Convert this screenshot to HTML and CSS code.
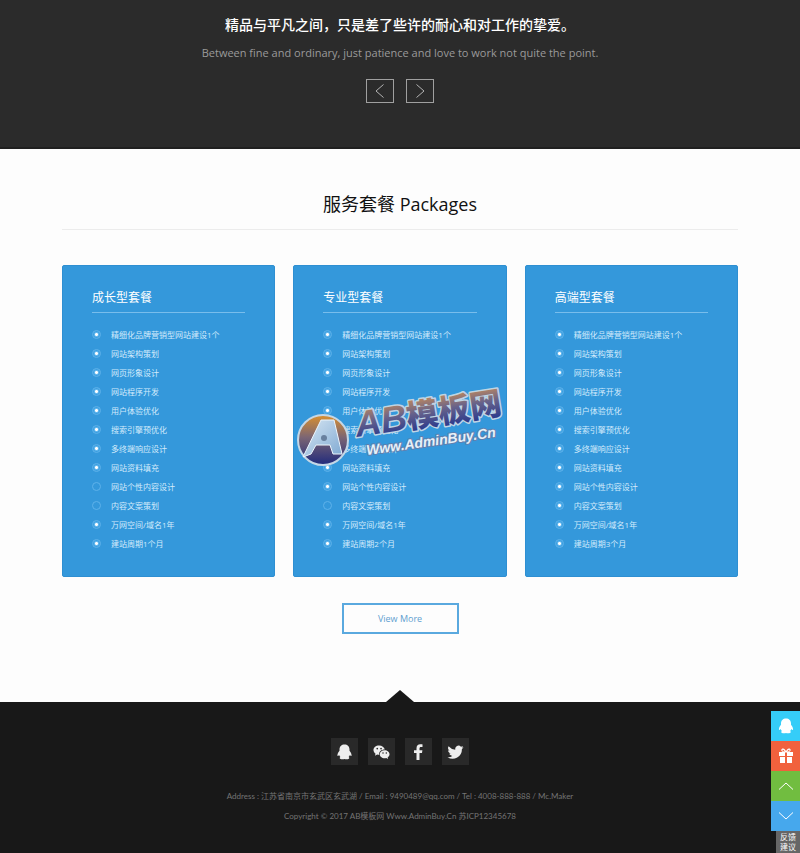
FILE: index.html
```html
<!DOCTYPE html>
<html lang="zh-CN">
<head>
<meta charset="utf-8">
<meta name="viewport" content="width=device-width, initial-scale=1">
<title>服务套餐 Packages</title>
<link rel="stylesheet" href="styles.css">
</head>
<body>
<svg class="sprite" aria-hidden="true">
  <symbol id="qq" viewBox="0 0 16 16"><path d="M8 .5C5 .5 3 2.600 3 5.400v1.400C2 8 1 9.700.9 11.200c0 1.200.8 1 1.700-.1.200.8.700 1.500 1.300 2-1 .4-1.100 2.100.8 2.100H7.200L8 14.900l.8.300h2.500c1.900 0 1.800-1.700.8-2.100.600-.5 1.100-1.200 1.300-2 .9 1.100 1.700 1.300 1.700.1C15 9.700 14 8 13 6.800V5.400C13 2.600 11 .5 8 .5z"/></symbol>
  <symbol id="wechat" viewBox="0 0 18 16"><path fill-rule="evenodd" d="M6.500 1C3 1 .5 3.200.5 6c0 1.600.9 3 2.200 3.900L2 12l2.500-1.300c.6.200 1.300.3 2 .3C6 7.700 9 5.300 12.500 5.400 12 2.800 9.500 1 6.500 1zM4.500 3.500a.9.900 0 1 1 0 1.800.9.900 0 0 1 0-1.800zm4 0a.9.900 0 1 1 0 1.800.9.900 0 0 1 0-1.800zM12.300 6.200c-3 0-5.200 1.900-5.200 4.200s2.300 4.200 5.200 4.200c.6 0 1.200-.1 1.700-.2l2 1.100-.5-1.800c1.200-.8 2-2 2-3.300 0-2.300-2.300-4.200-5.200-4.200zm-1.700 2.100a.8.800 0 1 1 0 1.600.8.800 0 0 1 0-1.600zm3.500 0a.8.800 0 1 1 0 1.600.8.800 0 0 1 0-1.600z"/></symbol>
  <symbol id="facebook" viewBox="0 0 16 16"><path d="M6 16V9H3.500V6.200H6V4.300C6 1.700 7.500.3 9.800.3c1 0 1.900.1 2.200.1v2.600h-1.500C9.300 3 9 3.600 9 4.500v1.700h2.900L11.500 9H9v7z"/></symbol>
  <symbol id="twitter" viewBox="0 0 16 16"><path d="M16 3.200c-.6.300-1.200.4-1.900.5.700-.4 1.200-1 1.400-1.800-.6.400-1.300.6-2.100.8A3.300 3.300 0 0 0 7.800 5.700 9.300 9.300 0 0 1 1.100 2.300a3.300 3.300 0 0 0 1 4.400c-.5 0-1-.2-1.500-.4 0 1.600 1.100 2.900 2.600 3.200-.5.100-1 .2-1.500.1.400 1.300 1.600 2.200 3.100 2.300A6.600 6.600 0 0 1 0 13.200 9.300 9.300 0 0 0 14.400 5c.6-.5 1.200-1.100 1.600-1.800z"/></symbol>
  <symbol id="gift" viewBox="0 0 16 16"><path fill-rule="evenodd" d="M1 4h4C2.500 3 3 .5 5 .5c1.500 0 2.500 1.500 3 2.800C8.500 2 9.500.5 11 .5c2 0 2.500 2.500 0 3.500h4v4H9V4.500H7V8H1zm4-2.300c-1 0-.8 1.600 1.800 1.900C6.300 2.500 5.700 1.700 5 1.700zm6 0c-.7 0-1.300.8-1.800 1.900 2.600-.3 2.800-1.900 1.800-1.900zM2 9h5v6H2zm7 0h5v6H9z"/></symbol>
  <symbol id="left" viewBox="0 0 16 16"><path class="line" d="M11.500 1.500 4 8l7.500 6.500"/></symbol>
  <symbol id="right" viewBox="0 0 16 16"><path class="line" d="M4.500 1.500 12 8l-7.500 6.500"/></symbol>
  <symbol id="up" viewBox="0 0 16 16"><path class="line" d="M1 11.500 8 5l7 6.500"/></symbol>
  <symbol id="down" viewBox="0 0 16 16"><path class="line" d="M1 4.500 8 11l7-6.500"/></symbol>
</svg>

<section class="motto">
  <h2>精品与平凡之间，只是差了些许的耐心和对工作的挚爱。</h2>
  <p>Between fine and ordinary, just patience and love to work not quite the point.</p>
  <div class="pager">
    <button type="button" aria-label="Previous"><svg><use href="#left"/></svg></button>
    <button type="button" aria-label="Next"><svg><use href="#right"/></svg></button>
  </div>
</section>

<main class="packages">
  <h1>服务套餐 Packages</h1>
  <div class="cards">
    <article class="card">
      <h3>成长型套餐</h3>
      <ul>
        <li>精细化品牌营销型网站建设1个</li><li>网站架构策划</li><li>网页形象设计</li><li>网站程序开发</li><li>用户体验优化</li><li>搜索引擎预优化</li><li>多终端响应设计</li><li>网站资料填充</li><li class="off">网站个性内容设计</li><li class="off">内容文案策划</li><li>万网空间/域名1年</li><li>建站周期1个月</li>
      </ul>
    </article>
    <article class="card">
      <h3>专业型套餐</h3>
      <ul>
        <li>精细化品牌营销型网站建设1个</li><li>网站架构策划</li><li>网页形象设计</li><li>网站程序开发</li><li>用户体验优化</li><li>搜索引擎预优化</li><li>多终端响应设计</li><li>网站资料填充</li><li>网站个性内容设计</li><li class="off">内容文案策划</li><li>万网空间/域名1年</li><li>建站周期2个月</li>
      </ul>
      <svg class="watermark" viewBox="0 0 212 86" role="img" aria-label="AB模板网 Www.AdminBuy.Cn">
        <defs>
          <linearGradient id="ball" x1="0" y1="0" x2="0" y2="1"><stop offset="0" stop-color="#d9902f"/><stop offset=".45" stop-color="#7b6574"/><stop offset="1" stop-color="#202a7c"/></linearGradient>
          <linearGradient id="ink" x1="0" y1="0" x2="0" y2="1"><stop offset=".15" stop-color="#c28a5c"/><stop offset=".5" stop-color="#65618b"/><stop offset=".9" stop-color="#28378c"/></linearGradient>
          <linearGradient id="steel" x1="0" y1="0" x2="1" y2="1"><stop offset="0" stop-color="#d8e7f3"/><stop offset="1" stop-color="#7fa9d2"/></linearGradient>
        </defs>
        <circle cx="27" cy="55" r="25" fill="url(#ball)" stroke="#c4d7e6" stroke-width="2"/>
        <path d="M7 72 25 35h13l8 34h-9l-3-9H20l-5 9z" fill="url(#steel)" stroke="#edf5fb"/>
        <circle cx="28" cy="53" r="3" fill="#68809e"/>
        <text class="wm-name" x="61" y="52" transform="rotate(-9 61 52)"><tspan class="wm-latin">AB</tspan>模板网</text>
        <text class="wm-url" x="71" y="70" transform="rotate(-8 71 70)">Www.AdminBuy.Cn</text>
      </svg>
    </article>
    <article class="card">
      <h3>高端型套餐</h3>
      <ul>
        <li>精细化品牌营销型网站建设1个</li><li>网站架构策划</li><li>网页形象设计</li><li>网站程序开发</li><li>用户体验优化</li><li>搜索引擎预优化</li><li>多终端响应设计</li><li>网站资料填充</li><li>网站个性内容设计</li><li>内容文案策划</li><li>万网空间/域名1年</li><li>建站周期3个月</li>
      </ul>
    </article>
  </div>
  <a class="more" href="#">View More</a>
</main>

<footer class="footer">
  <nav class="social">
    <a href="#" aria-label="QQ"><svg><use href="#qq"/></svg></a>
    <a href="#" aria-label="WeChat"><svg><use href="#wechat"/></svg></a>
    <a href="#" aria-label="Facebook"><svg><use href="#facebook"/></svg></a>
    <a href="#" aria-label="Twitter"><svg><use href="#twitter"/></svg></a>
  </nav>
  <p>Address : 江苏省南京市玄武区玄武湖 / Email : 9490489@qq.com / Tel : 4008-888-888 / Mc.Maker</p>
  <p>Copyright © 2017 AB模板网 Www.AdminBuy.Cn 苏ICP12345678</p>
</footer>

<aside class="tools">
  <a class="tool chat" href="#" aria-label="QQ"><svg><use href="#qq"/></svg></a>
  <a class="tool present" href="#" aria-label="Gift"><svg><use href="#gift"/></svg></a>
  <a class="tool top" href="#" aria-label="Top"><svg><use href="#up"/></svg></a>
  <a class="tool bottom" href="#" aria-label="Bottom"><svg><use href="#down"/></svg></a>
  <a class="feedback" href="#">反馈<br>建议</a>
</aside>
</body>
</html>
```
FILE: styles.css
```css
* { box-sizing: border-box; }
body {
  margin: 0;
  background: #fdfdfd;
  color: #111;
  font-family: "Open Sans", "Noto Sans CJK SC", sans-serif;
}
h1, h2, h3, p, ul { margin: 0; padding: 0; font-weight: 400; }
ul { list-style: none; }
a { color: inherit; text-decoration: none; }
svg { display: block; width: 16px; height: 16px; fill: currentColor; }
.sprite { position: absolute; width: 0; height: 0; }
.line { fill: none; stroke: currentColor; stroke-width: 1; }

.motto {
  padding: 13px 20px 44px;
  border-bottom: 2px solid #202020;
  background: #2b2b2b;
  color: #fff;
  text-align: center;
}
.motto h2 { font-size: 14px; line-height: 24px; font-weight: 500; }
.motto p { margin-top: 7px; font-size: 11px; line-height: 18px; color: #9a9a9a; }
.pager { display: flex; justify-content: center; gap: 12px; margin-top: 17px; }
.pager button {
  display: grid;
  place-items: center;
  width: 28px;
  height: 24px;
  padding: 0;
  border: 1px solid #a0a0a0;
  background: none;
  color: #b4b4b4;
}

.packages { padding: 40px 62px 68px; }
.packages h1 {
  padding-bottom: 10px;
  border-bottom: 1px solid #ececec;
  font-size: 18px;
  line-height: 30px;
  text-align: center;
}
.cards {
  display: grid;
  grid-template-columns: repeat(3, 1fr);
  gap: 18px;
  margin-top: 35px;
}
.card {
  position: relative;
  padding: 22px 29px 23px;
  border: 1px solid #2e8fd2;
  border-radius: 2px;
  background: #3498db;
  color: #d3ebfb;
}
.card h3 {
  padding-bottom: 4px;
  border-bottom: 1px solid #78bdec;
  color: #fff;
  font-size: 12px;
  line-height: 20px;
}
.card ul { margin-top: 12px; }
.card li {
  display: flex;
  align-items: center;
  gap: 10px;
  font-size: 8px;
  line-height: 19px;
  white-space: nowrap;
}
.card li::before {
  content: "";
  width: 7px;
  height: 7px;
  border: 1px solid #5eb2ea;
  border-radius: 50%;
  background: radial-gradient(circle, #fff 1px, #65b7ed 2px, #3b9fe1 3px);
}
.card li.off::before { background: none; }

.watermark {
  position: absolute;
  top: 119px;
  left: 2px;
  width: 212px;
  height: 86px;
  overflow: visible;
}
.wm-name, .wm-url { paint-order: stroke; stroke-linejoin: round; font-weight: 900; }
.wm-name { fill: url(#ink); stroke: #bfd4e4; stroke-width: 3px; font-family: "Noto Sans CJK SC", sans-serif; font-size: 32px; }
.wm-latin { font-family: "Liberation Sans", sans-serif; font-style: italic; font-weight: 700; font-size: 36px; }
.wm-url { fill: #e6f1f9; stroke: #5f7fae; stroke-width: 2px; font-family: "Liberation Sans", sans-serif; font-size: 14px; font-style: italic; }

.more {
  display: block;
  width: 117px;
  margin: 26px auto 0;
  border: 2px solid #5aa9df;
  color: #5f9fd0;
  font-size: 9px;
  line-height: 27px;
  text-align: center;
}

.footer {
  position: relative;
  padding: 36px 20px 28px;
  background: #181818;
  color: #747474;
  font-family: Lato, "Noto Sans CJK SC", sans-serif;
  font-size: 8px;
  line-height: 20px;
  text-align: center;
}
.footer::before {
  content: "";
  position: absolute;
  bottom: 100%;
  left: 50%;
  margin-left: -14px;
  border: 14px solid transparent;
  border-top: 0;
  border-bottom: 12px solid #181818;
}
.social { display: flex; justify-content: center; gap: 10px; margin-bottom: 21px; }
.social a { display: grid; place-items: center; width: 27px; height: 27px; background: #292929; color: #eee; }
.social svg { width: 17px; }

.tools { position: fixed; right: 0; bottom: 0; display: flex; flex-direction: column; align-items: flex-end; color: #fff; }
.tool { display: grid; place-items: center; width: 29px; height: 30px; }
.chat { background: #35cdf8; }
.present { background: #f1613d; }
.top { background: #71bd40; }
.bottom { background: #46a8ed; }
.feedback { padding: 1px 4px; background: #666; font-size: 8px; line-height: 10px; }
```
